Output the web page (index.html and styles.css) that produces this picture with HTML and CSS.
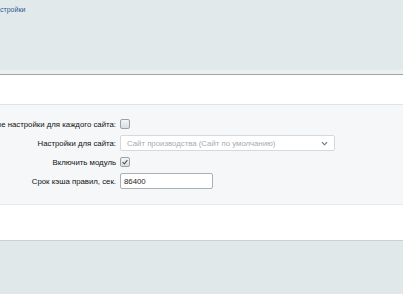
FILE: index.html
```html
<!DOCTYPE html>
<html lang="ru">
<head>
<meta charset="utf-8">
<link rel="stylesheet" href="styles.css">
</head>
<body>
<div class="page">
  <header class="top">
    <div class="top-main"><a class="crumb" href="#">стройки</a></div>
    <div class="top-strip"></div>
  </header>
  <div class="gap-white"></div>
  <section class="form">
    <div class="row">
      <div class="label"><span>ные настройки для каждого сайта:</span></div>
      <div class="ctrl"><span class="cb"></span></div>
    </div>
    <div class="row">
      <div class="label"><span>Настройки для сайта:</span></div>
      <div class="ctrl">
        <div class="select"><span>Сайт производства (Сайт по умолчанию)</span>
          <svg class="chev" viewBox="0 0 8 5" width="7" height="5"><path d="M1 1 L4 4 L7 1" fill="none" stroke="#6a7073" stroke-width="1.3"/></svg>
        </div>
      </div>
    </div>
    <div class="row">
      <div class="label"><span>Включить модуль</span></div>
      <div class="ctrl"><span class="cb checked"><svg viewBox="0 0 10 10" width="10" height="10"><path d="M2 5.2 L4.2 7.4 L8 2.6" fill="none" stroke="#4f5558" stroke-width="1.3"/></svg></span></div>
    </div>
    <div class="row">
      <div class="label"><span>Срок кэша правил, сек.</span></div>
      <div class="ctrl"><div class="input">86400</div></div>
    </div>
  </section>
  <div class="gap-white2"></div>
  <footer class="bottom"></footer>
</div>
</body>
</html>
```
FILE: styles.css
```css
html, body {
  margin: 0;
  padding: 0;
  background: #ffffff;
}
.page {
  width: 403px;
  height: 294px;
  overflow: hidden;
  display: flex;
  flex-direction: column;
  font-family: "Liberation Sans", Arial, sans-serif;
  font-size: 7.8px;
  color: #111;
}
.top {
  height: 75px;
  display: flex;
  flex-direction: column;
  border-bottom: 1px solid #9ea3a5;
  box-sizing: border-box;
}
.top-main {
  flex: 1;
  background: #e2e9eb;
  padding: 5px 0 0 0;
}
.crumb {
  color: #2f5a98;
  text-decoration: none;
  font-size: 7px;
}
.top-strip {
  height: 4px;
  background: #ebf0f1;
}
.gap-white {
  height: 29px;
  border-bottom: 1px solid #dfe4e6;
}
.form {
  height: 100px;
  box-sizing: border-box;
  background: #f5f7f8;
  border-bottom: 1px solid #e6ebec;
  padding-top: 11px;
  display: flex;
  flex-direction: column;
  gap: 3px;
}
.row {
  display: grid;
  grid-template-columns: 116px 1fr;
  column-gap: 4px;
  align-items: center;
  height: 16px;
}
.label {
  display: flex;
  justify-content: flex-end;
  white-space: nowrap;
  color: #111;
}
.ctrl {
  display: flex;
  align-items: center;
}
.cb {
  width: 10px;
  height: 10px;
  box-sizing: border-box;
  border: 1px solid #9ba2a5;
  border-radius: 2px;
  background: linear-gradient(#f3f5f6, #d9dee0);
  display: flex;
  align-items: center;
  justify-content: center;
}
.cb svg {
  display: block;
}
.select {
  width: 215px;
  height: 16px;
  box-sizing: border-box;
  border: 1px solid #d4d9db;
  border-radius: 2px;
  background: #ffffff;
  color: #a7acae;
  display: flex;
  align-items: center;
  justify-content: space-between;
  padding: 0 6px 0 6px;
}
.chev {
  display: block;
}
.input {
  width: 93px;
  height: 16px;
  box-sizing: border-box;
  border: 1px solid #a9b1b4;
  border-radius: 2px;
  background: #ffffff;
  color: #1e1e1e;
  display: flex;
  align-items: center;
  padding-left: 3px;
}
.gap-white2 {
  height: 35px;
  border-bottom: 1px solid #c9d1d4;
}
.bottom {
  flex: 1;
  background: #e1e8ea;
}
```
